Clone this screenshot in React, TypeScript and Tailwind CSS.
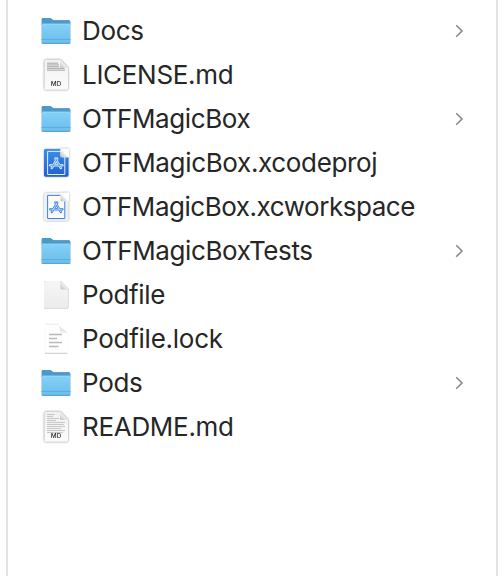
import React from "react";

type Kind = "folder" | "md" | "readme" | "project" | "workspace" | "blank" | "lines";

const items: { name: string; kind: Kind; spacing: string }[] = [
  { name: "Docs", kind: "folder", spacing: "tracking-[-0.35px]" },
  { name: "LICENSE.md", kind: "md", spacing: "tracking-[-0.3px]" },
  { name: "OTFMagicBox", kind: "folder", spacing: "tracking-[-0.4px]" },
  { name: "OTFMagicBox.xcodeproj", kind: "project", spacing: "tracking-[-0.34px]" },
  { name: "OTFMagicBox.xcworkspace", kind: "workspace", spacing: "tracking-[-0.46px]" },
  { name: "OTFMagicBoxTests", kind: "folder", spacing: "tracking-[-0.37px]" },
  { name: "Podfile", kind: "blank", spacing: "tracking-[-0.32px]" },
  { name: "Podfile.lock", kind: "lines", spacing: "tracking-[-0.26px]" },
  { name: "Pods", kind: "folder", spacing: "tracking-[-0.3px]" },
  { name: "README.md", kind: "readme", spacing: "tracking-[-0.3px]" },
];

const svgClass = "h-8 w-8 shrink-0 overflow-visible";

function Folder() {
  return (
    <svg viewBox="0 0 32 32" className={`${svgClass} drop-shadow-[0_0.5px_0.6px_rgba(0,0,0,0.4)]`}>
      <path d="M1.7 10V4.4q0-1.4 1.4-1.4h6.6q.8 0 1.4.5l1.7 1.3q.5.4 1.2.4h14.8q1.5 0 1.5 1.5V10z" fill="#4a9bc9" />
      <path d="M1.7 9.6q0-.9.9-.9h26.8q.9 0 .9.9v18q0 1.2-1.2 1.2H2.9q-1.2 0-1.2-1.2z" fill="url(#folderFace)" />
      <path d="M1.9 9.2h28.2" stroke="#9adcf9" strokeWidth=".8" />
      <path d="M1.7 24.5h28.6" stroke="#58acdc" strokeWidth=".9" />
      <path d="M1.9 28.4h28.2" stroke="#559fc9" strokeWidth=".8" />
    </svg>
  );
}

const page = "M6 .8h14l8 8.2v20.3q0 1.5-1.5 1.5H6q-1.5 0-1.5-1.5v-27Q4.5.8 6 .8z";
const sheet = "M5.5 2h15L28.5 10.3v17.8q0 1.6-1.6 1.6H5.6Q4 29.7 4 28.1V3.5Q4 2 5.5 2z";

function Markdown({ full }: { full: boolean }) {
  const ends = full ? [15, 13, 19, 16, 25, 24, 25, 21, 25, 23] : [18, 19, 19, 24.5, 25];
  return (
    <svg viewBox="0 0 32 32" className={`${svgClass} drop-shadow-[0_0.5px_1px_rgba(0,0,0,0.5)]`}>
      <path d={page} fill="url(#paper)" />
      {ends.map((end, i) => (
        <path
          key={i}
          d={`M7 ${full ? 3.5 + i * 2 : 4.2 + i * 1.75}H${end}`}
          stroke={full ? "#c9c9c9" : "#b2b2b2"}
          strokeWidth={full ? 1.1 : 1.2}
        />
      ))}
      <path d="M20 .8v6.7Q20 9 21.5 9H28z" fill="url(#fold)" />
      <text x="16.2" y="27.4" textAnchor="middle" fontSize="6.4" fontWeight="500" fill="#2c2c2c" fontFamily="Inter, sans-serif" letterSpacing=".3">
        MD
      </text>
    </svg>
  );
}

function Xcode({ blue }: { blue: boolean }) {
  const ink = blue ? "#e4effc" : "#3b82e6";
  const core = blue ? "#3f86df" : "#d3e4fb";
  return (
    <svg viewBox="0 0 32 32" className={`${svgClass} drop-shadow-[0_0.5px_0.8px_rgba(0,0,0,0.35)]`}>
      <path d={sheet} fill={blue ? "url(#blueSheet)" : "#f1f1f1"} />
      <path d="M7.6 4.4h17.2v23.1H7.6z" fill={blue ? "none" : "#fafafa"} stroke={ink} strokeWidth="1" />
      <g fill="none" strokeLinecap="round" strokeLinejoin="round">
        <g stroke={ink} strokeWidth="2.4">
          <path d="M10.4 18.2h11.9" />
          <path d="M15.4 11.6L20.8 21M17.2 11.6L11.8 21" />
        </g>
        <g stroke={core} strokeWidth=".8">
          <path d="M10.6 18.2h11.5M15.5 11.8l5.2 9M17.1 11.8L11.9 20.8" />
        </g>
      </g>
      <path d="M20.5 1.6v7.2q0 1.5 1.5 1.5h7V1.6z" fill="#ffffff" />
      <path d="M20.5 2v6.8q0 1.5 1.5 1.5h6.5z" fill="url(#fold)" />
    </svg>
  );
}

function Blank() {
  return (
    <svg viewBox="0 0 32 32" className={`${svgClass} drop-shadow-[0_0.5px_0.6px_rgba(0,0,0,0.4)]`}>
      <path d={sheet} fill="url(#blankSheet)" />
      <path d="M20.5 2v6.8q0 1.5 1.5 1.5h6.5z" fill="url(#fold)" stroke="#d1d1d1" strokeWidth=".3" />
    </svg>
  );
}

function Lines() {
  return (
    <svg viewBox="0 0 32 32" className={svgClass}>
      <path d="M5 1.2h14" stroke="#e6e6e6" strokeWidth=".8" />
      <path d="M17 1.2l10.7 8.6h-6.5q-1.7 0-1.7-1.7V5Q19 2.3 17 1.2z" fill="url(#softFold)" />
      <path d="M9 11.5h13M9 15.5h8M9 19.5h13M9 23.5h9.5" stroke="#b9b9b9" strokeWidth="1.3" />
      <path d="M5 30.3h22.3" stroke="#c8c8c8" strokeWidth="1" />
      <path d="M4.7 2v28M27.8 10v20" stroke="#f6f6f6" strokeWidth=".6" />
    </svg>
  );
}

function Icon({ kind }: { kind: Kind }) {
  if (kind === "folder") return <Folder />;
  if (kind === "md" || kind === "readme") return <Markdown full={kind === "readme"} />;
  if (kind === "project" || kind === "workspace") return <Xcode blue={kind === "project"} />;
  return kind === "blank" ? <Blank /> : <Lines />;
}

function Gradients() {
  return (
    <svg className="absolute h-0 w-0" aria-hidden="true">
      <defs>
        <linearGradient id="folderFace" x2="0" y2="1">
          <stop stopColor="#84d0f7" />
          <stop offset="1" stopColor="#6bbdec" />
        </linearGradient>
        <linearGradient id="paper" x2="0" y2="1">
          <stop stopColor="#f1f1f1" />
          <stop offset="1" stopColor="#fcfcfc" />
        </linearGradient>
        <linearGradient id="blueSheet" x2="0" y2="1">
          <stop stopColor="#3c90e5" />
          <stop offset="1" stopColor="#1e5fd1" />
        </linearGradient>
        <linearGradient id="blankSheet" x2="0" y2="1">
          <stop stopColor="#f6f6f6" />
          <stop offset="1" stopColor="#ebebeb" />
        </linearGradient>
        <linearGradient id="fold" x1="0" y1="1" x2=".55" y2=".4">
          <stop stopColor="#bcbcbc" />
          <stop offset="1" stopColor="#fbfbfb" />
        </linearGradient>
        <linearGradient id="softFold" x1="0" y1="1" x2=".7" y2=".3">
          <stop stopColor="#ffffff" />
          <stop offset="1" stopColor="#d8d8d8" />
        </linearGradient>
      </defs>
    </svg>
  );
}

export default function App() {
  return (
    <div className="h-[576px] w-[504px] overflow-hidden bg-white pl-1.5">
      <Gradients />
      <ul className="h-full w-[492px] border-x-2 border-[#e3e3e3] pt-[9px] font-['Inter',sans-serif] text-[26px] text-[#262626]">
        {items.map((item) => (
          <li key={item.name} className="flex h-11 items-center pr-8 pl-8">
            <Icon kind={item.kind} />
            <span className={`ml-2.5 flex-1 leading-8 whitespace-nowrap ${item.spacing}`}>{item.name}</span>
            {item.kind === "folder" && (
              <svg viewBox="0 0 10 14" className="h-3.5 w-2.5">
                <path d="M2.2 1.3L8 7 2.2 12.7" fill="none" stroke="#8a8a8a" strokeWidth="1.6" />
              </svg>
            )}
          </li>
        ))}
      </ul>
    </div>
  );
}
